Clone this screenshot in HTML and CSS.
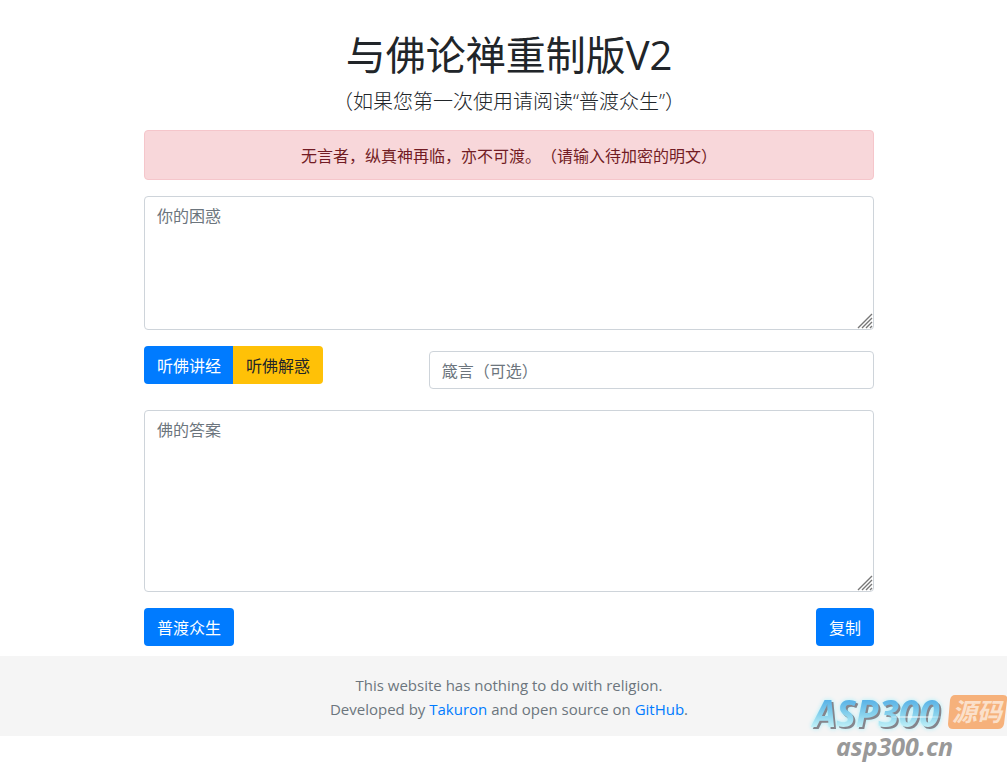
FILE: index.html
```
<!DOCTYPE html>
<html lang="zh-CN">

<head>
    <meta charset="UTF-8">
    <meta name="viewport" content="width=device-width, initial-scale=1.0">
    <title>与佛论禅重制版V2</title>
    <link rel="stylesheet" href="styles.css">
</head>

<body>
    <main class="page">
        <div class="container">
            <header class="title">
                <h1>与佛论禅重制版V2</h1>
                <p class="lead">（如果您第一次使用请阅读“普渡众生”）</p>
            </header>

            <div class="alert" role="alert">无言者，纵真神再临，亦不可渡。（请输入待加密的明文）</div>

            <div class="text-field">
                <textarea id="input" class="form-control" rows="5" placeholder="你的困惑" aria-label="你的困惑"></textarea>
                <svg class="grip" viewBox="0 0 16 16" aria-hidden="true">
                    <path d="M1 15L15 1M5 15L15 5M9 15L15 9M13 15L15 13" />
                </svg>
            </div>

            <div class="controls">
                <div class="btn-group">
                    <button type="button" id="encodeBtn" class="btn btn-primary">听佛讲经</button>
                    <button type="button" id="decodeBtn" class="btn btn-warning">听佛解惑</button>
                </div>
                <input type="text" id="key" class="form-control key" placeholder="箴言（可选）" aria-label="箴言（可选）">
            </div>

            <div class="text-field">
                <textarea id="output" class="form-control" rows="7" placeholder="佛的答案" aria-label="佛的答案"></textarea>
                <svg class="grip" viewBox="0 0 16 16" aria-hidden="true">
                    <path d="M1 15L15 1M5 15L15 5M9 15L15 9M13 15L15 13" />
                </svg>
            </div>

            <div class="actions">
                <button type="button" id="helpBtn" class="btn btn-primary">普渡众生</button>
                <button type="button" id="copyBtn" class="btn btn-primary">复制</button>
            </div>
        </div>
    </main>

    <footer class="footer">
        <p>This website has nothing to do with religion.</p>
        <p>Developed by <a href="#">Takuron</a> and open source on <a href="#">GitHub</a>.</p>
    </footer>

    <div class="watermark">
        <svg viewBox="0 -12 200 90" role="img" aria-label="ASP300源码 asp300.cn">
            <defs>
                <linearGradient id="sky" x1="0" y1="0" x2="0" y2="1">
                    <stop offset="0.25" stop-color="#58b1e6" />
                    <stop offset="0.55" stop-color="#8ad3ed" />
                    <stop offset="0.8" stop-color="#c4f2f8" />
                </linearGradient>
                <radialGradient id="shine">
                    <stop offset="0" stop-color="#fff" />
                    <stop offset="1" stop-color="#fff" stop-opacity="0" />
                </radialGradient>
            </defs>
            <text class="wm-logo" x="6" y="35">ASP300</text>
            <ellipse cx="108" cy="25" rx="36" ry="1" fill="url(#shine)" />
            <path d="M146 3h50q5 0 4 5l-3 24q-1 5-6 5h-45q-5 0-5-5l2-24q1-5 5-5z" fill="#f6b17b" />
            <text class="wm-tag" x="145" y="29">源码</text>
            <text class="wm-site" x="29" y="64">asp300.cn</text>
        </svg>
    </div>
</body>

</html>
```
FILE: styles.css
```
* {
    box-sizing: border-box;
}

body {
    position: relative;
    min-height: 100vh;
    margin: 0;
    font-family: "Open Sans", "Noto Sans CJK SC", sans-serif;
    font-size: 16px;
    line-height: 24px;
    text-spacing-trim: space-all;
    color: #212529;
    background-color: #fff;
}

h1,
p {
    margin: 0;
}

.page,
.footer {
    padding-left: 11px;
}

.container {
    max-width: 730px;
    margin: 0 auto;
    padding-top: 31px;
}

.title {
    margin-bottom: 13px;
    text-align: center;
}

h1 {
    margin-bottom: 8px;
    font-size: 40px;
    font-weight: 400;
    line-height: 48px;
}

.lead {
    font-size: 20px;
    font-weight: 300;
    line-height: 30px;
}

.alert {
    margin-bottom: 16px;
    padding: 13px 20px 11px;
    border: 1px solid #f5c6cb;
    border-radius: 4px;
    color: #721c24;
    background-color: #f8d7da;
    text-align: center;
}

.text-field {
    position: relative;
    margin-bottom: 16px;
}

.form-control {
    display: block;
    width: 100%;
    padding: 7px 12px 5px;
    border: 1px solid #ced4da;
    border-radius: 4px;
    font: inherit;
    color: #495057;
    background-color: #fff;
}

.form-control::placeholder {
    color: #6c757d;
    opacity: 1;
}

.form-control:focus {
    border-color: #80bdff;
    outline: none;
}

textarea::-webkit-resizer {
    display: none;
}

.grip {
    position: absolute;
    right: 1px;
    bottom: 1px;
    width: 16px;
    height: 16px;
    fill: none;
    stroke: #777;
    stroke-width: 1.4;
    pointer-events: none;
}

.controls {
    display: grid;
    grid-template-columns: 39% 1fr;
    margin-bottom: 21px;
}

.key {
    height: 38px;
    margin-top: 5px;
}

.btn-group {
    display: flex;
    align-items: flex-start;
}

.btn {
    padding: 7px 12px 5px;
    border: 1px solid transparent;
    border-radius: 4px;
    font: inherit;
    cursor: pointer;
}

.btn-primary {
    color: #fff;
    background-color: #007bff;
}

.btn-warning {
    color: #212529;
    background-color: #ffc107;
}

.btn-group .btn:first-child {
    border-top-right-radius: 0;
    border-bottom-right-radius: 0;
}

.btn-group .btn:last-child {
    margin-left: -1px;
    border-top-left-radius: 0;
    border-bottom-left-radius: 0;
}

.actions {
    display: flex;
    justify-content: space-between;
    padding-bottom: 10px;
}

.footer {
    padding-top: 17px;
    padding-bottom: 15px;
    font-size: 15px;
    color: #6c757d;
    background-color: #f5f5f5;
    text-align: center;
}

.footer a {
    color: #007bff;
    text-decoration: none;
}

.watermark {
    position: absolute;
    right: 0;
    bottom: 0;
    width: 200px;
    pointer-events: none;
}

.watermark svg {
    display: block;
    overflow: visible;
}

.wm-logo {
    font: italic 700 37px "Open Sans", sans-serif;
    fill: url(#sky);
    filter: drop-shadow(2px 2px 0 #85858c) drop-shadow(0 0 2px #a8eefa);
}

.wm-tag {
    font: italic 700 25px "Noto Sans CJK SC", sans-serif;
    fill: #fbe0ca;
}

.wm-site {
    font: italic 700 25px "Open Sans", sans-serif;
    fill: #999;
}
```
